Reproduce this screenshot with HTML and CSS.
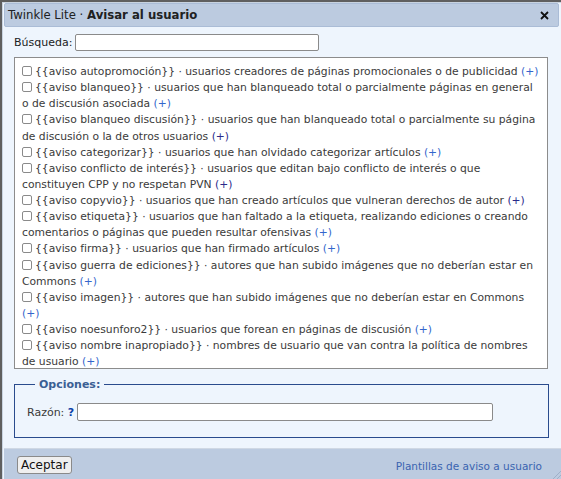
FILE: index.html
```html
<!DOCTYPE html>
<html lang="es">
<head>
<meta charset="utf-8">
<link rel="stylesheet" href="styles.css">
</head>
<body>
<div class="dialog">
  <div class="titlebar">
    <span class="title">Twinkle Lite · <b>Avisar al usuario</b></span>
    <svg class="close" width="9" height="9" viewBox="0 0 9 9"><path d="M1 1L8 8M8 1L1 8" stroke="#111" stroke-width="1.8" fill="none"/></svg>
  </div>
  <div class="content">
    <div class="search">
      <label>Búsqueda:</label>
      <input type="text" class="search-input">
    </div>
    <div class="list">
      <div class="item"><span class="cb"></span>{{aviso autopromoción}} · usuarios creadores de páginas promocionales o de publicidad <a class="plus">(+)</a></div>
      <div class="item"><span class="cb"></span>{{aviso blanqueo}} · usuarios que han blanqueado total o parcialmente páginas en general<br>o de discusión asociada <a class="plus">(+)</a></div>
      <div class="item"><span class="cb"></span>{{aviso blanqueo discusión}} · usuarios que han blanqueado total o parcialmente su página de discusión o la de otros usuarios <a class="plus visited">(+)</a></div>
      <div class="item"><span class="cb"></span>{{aviso categorizar}} · usuarios que han olvidado categorizar artículos <a class="plus">(+)</a></div>
      <div class="item"><span class="cb"></span>{{aviso conflicto de interés}} · usuarios que editan bajo conflicto de interés o que constituyen CPP y no respetan PVN <a class="plus visited">(+)</a></div>
      <div class="item"><span class="cb"></span>{{aviso copyvio}} · usuarios que han creado artículos que vulneran derechos de autor <a class="plus visited">(+)</a></div>
      <div class="item"><span class="cb"></span>{{aviso etiqueta}} · usuarios que han faltado a la etiqueta, realizando ediciones o creando comentarios o páginas que pueden resultar ofensivas <a class="plus">(+)</a></div>
      <div class="item"><span class="cb"></span>{{aviso firma}} · usuarios que han firmado artículos <a class="plus">(+)</a></div>
      <div class="item"><span class="cb"></span>{{aviso guerra de ediciones}} · autores que han subido imágenes que no deberían estar en Commons <a class="plus">(+)</a></div>
      <div class="item"><span class="cb"></span>{{aviso imagen}} · autores que han subido imágenes que no deberían estar en Commons <a class="plus">(+)</a></div>
      <div class="item"><span class="cb"></span>{{aviso noesunforo2}} · usuarios que forean en páginas de discusión <a class="plus">(+)</a></div>
      <div class="item"><span class="cb"></span>{{aviso nombre inapropiado}} · nombres de usuario que van contra la política de nombres de usuario <a class="plus">(+)</a></div>
      <div class="item"><span class="cb"></span>{{aviso prueba1}} · usuarios que han realizado ediciones de prueba <a class="plus">(+)</a></div>
    </div>
    <fieldset class="options">
      <legend>Opciones:</legend>
      <div class="reason">
        <label>Razón: <span class="help">?</span></label>
        <input type="text" class="reason-input">
      </div>
    </fieldset>
  </div>
  <div class="footer">
    <button class="accept">Aceptar</button>
    <a class="footer-link">Plantillas de aviso a usuario</a>
    <span class="grip"></span>
  </div>
</div>
</body>
</html>
```

FILE: styles.css
```css
html, body {
  margin: 0;
  padding: 0;
  height: 100%;
  overflow: hidden;
}
body {
  background: #5f5f5f;
  font-family: "DejaVu Sans", sans-serif;
  font-size: 11px;
  color: #202122;
}
.dialog {
  position: relative;
  margin: 2px 0 0 2px;
  height: 477px;
  background: #eef5fd;
  border-left: 1px solid #c8d3e0;
  border-top: 1px solid #c8d3e0;
  padding: 0 0 0 1px;
  display: flex;
  flex-direction: column;
  box-sizing: border-box;
}
.titlebar {
  height: 24px;
  background: #bccbe0;
  border: 1px solid #aabcd6;
  border-radius: 2px;
  margin-right: 2px;
  display: flex;
  align-items: center;
  justify-content: space-between;
  padding: 0 9px 0 3px;
  box-sizing: border-box;
}
.title {
  font-size: 11.7px;
  color: #202122;
}
.title b { font-weight: bold; }
.close {
  display: block;
}
.content {
  flex: 1;
  padding: 6px 10px 0 10px;
  display: flex;
  flex-direction: column;
}
.search {
  display: flex;
  align-items: center;
  gap: 3px;
  height: 18px;
  margin-bottom: 6px;
}
.search label { color: #202122; }
.search-input {
  width: 244px;
  height: 17px;
  box-sizing: border-box;
  border: 1px solid #8a8a8a;
  border-radius: 2px;
  background: #fff;
  padding: 0;
  margin: 0;
}
.list {
  height: 312px;
  box-sizing: border-box;
  border: 1px solid #8c8c8c;
  background: #fff;
  margin-right: 3px;
  padding: 6px 6px 0 7px;
  overflow: hidden;
  color: #3a3a3a;
  font-size: 10.75px;
}
.item {
  line-height: 1.5;
}
.cb {
  display: inline-block;
  width: 8px;
  height: 8px;
  border: 1px solid #8a8a8a;
  border-radius: 2px;
  background: #fff;
  margin-right: 3px;
  vertical-align: -1px;
}
.plus { color: #3366cc; }
.plus.visited { color: #2a2a8a; }
.options {
  margin: 9px 2px 0 0;
  border: 1px solid #2a4b8d;
  padding: 12px 12px 16px 12px;
  min-width: 0;
}
.options legend {
  font-weight: bold;
  color: #3a5f94;
  padding: 0 4px;
  margin-left: 8px;
}
.reason {
  display: flex;
  align-items: center;
  gap: 3px;
}
.reason label { color: #3a3a3a; }
.help {
  color: #0b3fa8;
  font-weight: bold;
}
.reason-input {
  width: 416px;
  height: 18px;
  box-sizing: border-box;
  border: 1px solid #8a8a8a;
  border-radius: 2px;
  background: #fff;
  padding: 0;
  margin: 0;
}
.footer {
  height: 30px;
  background: #bccbe0;
  border-top: 1px solid #cfd8e4;
  display: flex;
  align-items: center;
  justify-content: space-between;
  padding: 0 19px 0 13px;
  position: relative;
}
.accept {
  font-family: "DejaVu Sans", sans-serif;
  font-size: 12px;
  color: #111;
  height: 18px;
  padding: 0 3px;
  background: #efefef;
  border: 1px solid #8a8a8a;
  border-radius: 3px;
  margin-top: 2px;
}
.footer-link {
  color: #3a64b0;
  font-size: 10.5px;
  margin-top: 4px;
}
.grip {
  position: absolute;
  right: 0;
  bottom: 0;
  width: 10px;
  height: 10px;
  background: repeating-linear-gradient(135deg, transparent 0 2px, #9fb0c8 2px 3px);
  clip-path: polygon(100% 0, 100% 100%, 0 100%);
}
```
